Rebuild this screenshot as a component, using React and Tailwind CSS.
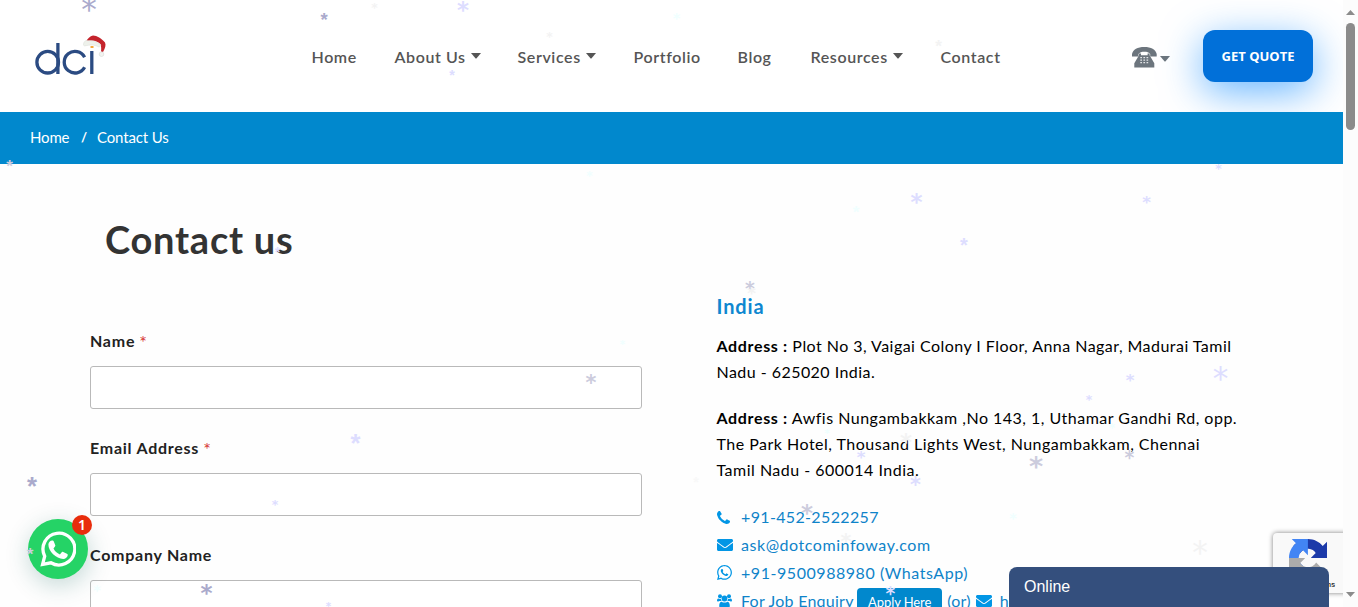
import React from "react";
import { FaEnvelope, FaWhatsapp } from "react-icons/fa";

const SIX = { family: '"DejaVu Sans", sans-serif', w: 0.45, cx: 0.25, cy: 0.335, weight: 400 };
const BOLD = { family: '"DejaVu Sans", sans-serif', w: 0.48, cx: 0.262, cy: 0.335, weight: 700 };
const FIVE = { family: '"Liberation Sans", sans-serif', w: 0.35, cx: 0.195, cy: 0.3, weight: 700 };

// [centre x, centre y, width, colour, glyph style]
const flakes = [
  [89, 4.5, 14, "#aaaacc", SIX], [324, 17, 6.5, "#aaaacc", FIVE], [374.5, 6.5, 6, "#f3f3f3", BOLD],
  [463, 6.5, 11, "#ddddff", BOLD], [549.5, 35.5, 6, "#f3f3f3", BOLD], [676.5, 15.5, 7, "#f0ffff", BOLD],
  [452, 72, 5, "#ddddff", FIVE], [938.5, 43.5, 6, "#f3f3f3", FIVE], [9.5, 163.5, 6, "#ccccdd", FIVE],
  [589.5, 174, 6, "#f0ffff", BOLD], [1218.5, 167.5, 6, "#ddddff", BOLD], [916.5, 198.5, 11, "#ddddff", BOLD],
  [1146.500, 200.5, 8, "#ddddff", BOLD], [856, 209, 6, "#f0ffff", FIVE], [964, 241, 7, "#ddddff", FIVE],
  [277.5, 249, 5, "#ddddff", FIVE], [750, 286.5, 9, "#ccccdd", BOLD], [751.5, 292, 8, "#f3f3f3", BOLD],
  [622.5, 342.5, 5, "#f0ffff", BOLD], [591, 379.5, 10, "#ccccdd", BOLD], [355.5, 439, 9, "#ddddff", FIVE],
  [1130, 378.5, 8, "#ddddff", BOLD], [1220.5, 373.5, 14, "#ddddff", SIX], [1089, 398.5, 6, "#ddddff", BOLD],
  [827, 431, 5, "#f0ffff", BOLD], [906, 438.5, 11, "#f3f3f3", BOLD], [861, 455.5, 8, "#ddddff", BOLD],
  [1129.5, 455.5, 9, "#ccccdd", BOLD], [1036, 462, 13, "#ccccdd", BOLD], [915.5, 481.5, 10, "#ddddff", BOLD],
  [32, 482, 9, "#aaaacc", FIVE], [275, 503.5, 6, "#ddddff", BOLD], [807, 509.5, 11, "#ccccdd", BOLD],
  [846, 539, 10, "#f3f3f3", BOLD], [1013, 516, 7, "#f0ffff", BOLD], [1200, 547.5, 14, "#f3f3f3", SIX],
  [97, 588, 7, "#f0ffff", BOLD], [206.5, 589.5, 11, "#aaaacc", BOLD], [328.5, 604.5, 5, "#ddddff", BOLD],
  [30, 551, 6, "#ccccdd", FIVE], [890.5, 591, 9, "#ddddff", BOLD], [696, 479, 5, "#f8f8f8", FIVE],
  [1112, 426, 6, "#f0ffff", BOLD],
];

function Flake({ data: [x, y, width, color, glyph] }) {
  const size = width / glyph.w;
  return (
    <span
      className="absolute leading-none select-none"
      style={{
        left: x - glyph.cx * size,
        top: y - glyph.cy * size,
        fontSize: size,
        color,
        fontFamily: glyph.family,
        fontWeight: glyph.weight,
      }}
    >
      *
    </span>
  );
}

function Logo() {
  return (
    <svg width="76" height="44" viewBox="32 32 76 44" fill="none">
      <g stroke="#2b4b82" strokeWidth="3.3">
        <circle cx="47.7" cy="61.2" r="10.8" />
        <path d="M57.9 42v31" />
        <path d="M84.6 56.2A10.8 10.8 0 1 0 84.6 66.2" />
        <path d="M91.8 50v23" />
      </g>
      <path d="M90.5 45h3v2h-3z" fill="#f5a93c" />
      <path d="M86 41c1.500-3.500 4-6 7-6.500 4 0 8.500 3 12 7 1.200 2.500.200 5.500-2 9.500l-2-.5c.4-2.500.3-5-.6-7.500-4-3.600-9-4.500-14.400-2z" fill="#c4242c" />
      <path d="M83.500 43c.4-2 1.500-3.500 3.500-3.500 5 0 9.500 1 13.500 4 .6 1.200-.4 2.600-1.800 2.400-4.500-2.400-9-2.200-13.700-1-1.200.2-1.700-.8-1.500-1.900z" fill="#eef1eb" stroke="#d9ddd6" strokeWidth=".5" />
      <circle cx="101.500" cy="53.200" r="2.300" fill="#f1f3f0" stroke="#d5d8d3" strokeWidth=".6" />
    </svg>
  );
}

function Caret() {
  return (
    <svg width="10" height="6" viewBox="0 0 10 6" className="mb-0.5 shrink-0">
      <path d="M0 0h10L5.600 5.200q-.6.600-1.200 0z" fill="currentColor" />
    </svg>
  );
}

function Telephone() {
  return (
    <svg width="25" height="21" viewBox="0 0 25 21" fill="#6c757d">
      <path d="M0 9.500V7C1 2.500 5.500 0 12.300 0S23.700 2.500 24.700 7v2.500h-6.500V7C17 5.300 15 4.800 12.300 4.800S7.700 5.300 6.500 7v2.500z" />
      <path d="M7 6.500h2v1.800h6.600V6.500h2v1.700l4.700 8V20.500H2.300v-4.300l4.700-8z" />
      <g fill="#fff">
        <path d="M8.300 10h1.700v1.200H8.300zM11.400 10h1.700v1.200h-1.700zM14.500 10h1.700v1.200h-1.700zM8.300 12.500h1.700v1.200H8.300zM11.400 12.500h1.700v1.200h-1.700zM14.500 12.500h1.700v1.200h-1.700zM8.300 15h1.700v1.200H8.300zM11.400 15h1.700v1.200h-1.700zM14.500 15h1.700v1.200h-1.700z" opacity=".8" />
      </g>
    </svg>
  );
}

function Phone() {
  return (
    <svg width="13" height="13" viewBox="0 128 1408 1408" fill="currentColor">
      <path d="M1408 1240q0 27-10 70.500t-21 68.500q-21 50-122 106-94 51-186 51-27 0-53-3.500t-57.500-12.500-47-14.500-55.500-20.500-49-18q-98-35-175-83-127-79-264-216t-216-264q-48-77-83-175-3-9-18-49t-20.500-55.500-14.500-47-12.500-57.500-3.500-53q0-92 51-186 56-101 106-122 25-11 68.500-21t70.500-10q14 0 21 3 18 6 53 76 11 19 30 54t35 63.500 31 53.500q3 4 17.500 25t21.500 35.500 7 28.500q0 20-28.500 50t-62 55-62 53-28.500 46q0 9 5 22.500t8.500 20.500 14 24 11.500 19q76 137 174 235t235 174q2 1 19 11.500t24 14 20.500 8.500 22.500 5q18 0 46-28.500t53-62 55-62 50-28.500q14 0 28.500 7t35.500 21.500 25 17.500q25 15 53.500 31t63.500 35 54 30q70 35 76 53 3 7 3 21z" />
    </svg>
  );
}

function People() {
  return (
    <svg width="15" height="14" viewBox="0 0 15 14" fill="currentColor">
      <circle cx="3" cy="2.200" r="2" />
      <circle cx="12" cy="2.200" r="2" />
      <circle cx="7.500" cy="4.500" r="2.900" />
      <path d="M0 7.300C0 5.500.4 4.500 1.300 4.500c.6.300 1.700.6 2.600.2.100 1 .3 1.600.8 2.300H2.500L1.300 7.600zM15 7.300c0-1.800-.4-2.800-1.300-2.800-.6.300-1.700.6-2.600.2-.1 1-.3 1.600-.8 2.300h2.200l1.200.6z" />
      <path d="M2.200 12c0-2.700.8-4.300 2.500-4.300.8.500 1.600.9 2.800.9s2-.4 2.800-.9c1.700 0 2.500 1.600 2.500 4.300 0 1.200-.8 2-1.900 2H4.100c-1.100 0-1.900-.8-1.900-2z" />
    </svg>
  );
}

function Recaptcha() {
  return (
    <svg width="38" height="38" viewBox="0 0 64 64">
      <path fill="#1c3aa9" d="M64 31.955l-.033-1.370V4.687l-7.160 7.160C50.948 4.674 42.033.093 32.050.093c-10.400 0-19.622 4.960-25.458 12.640l11.736 11.860a15.550 15.550 0 0 1 4.754-5.334c2.050-1.600 4.952-2.906 8.968-2.906.485 0 .860.057 1.135.163 4.976.393 9.288 3.140 11.828 7.124l-8.307 8.307L64 31.953" />
      <path fill="#4285f4" d="M31.862.094l-1.370.033H4.594l7.160 7.160C4.580 13.147 0 22.060 0 32.046c0 10.400 4.960 19.622 12.640 25.458L24.500 45.768a15.550 15.550 0 0 1-5.334-4.754c-1.600-2.050-2.906-4.952-2.906-8.968 0-.485.057-.860.163-1.135.393-4.976 3.140-9.288 7.124-11.828l8.307 8.307L31.860.095" />
      <path fill="#ababab" d="M.001 32.045l.033 1.370v25.898l7.160-7.160c5.860 7.173 14.774 11.754 24.760 11.754 10.400 0 19.622-4.960 25.458-12.640l-11.736-11.860a15.550 15.550 0 0 1-4.754 5.334c-2.050 1.600-4.952 2.906-8.968 2.906-.485 0-.860-.057-1.135-.163-4.976-.393-9.288-3.140-11.828-7.124l8.307-8.307c-10.522.040-22.400.066-27.295-.005" />
    </svg>
  );
}

const navItems = [
  { label: "Home", box: "w-[83px]" },
  { label: "About Us", box: "w-[123px]", menu: true },
  { label: "Services", box: "w-[116px]", menu: true },
  { label: "Portfolio", box: "w-[104px]" },
  { label: "Blog", box: "w-[73px]" },
  { label: "Resources", box: "w-[130px]", menu: true },
  { label: "Contact", box: "w-[60px]" },
];

function Header() {
  return (
    <header className="flex h-28 shrink-0 items-center overflow-hidden bg-white pl-8">
      <div className="w-[279.500px] shrink-0 pb-0.5"><Logo /></div>
      <nav className="flex shrink-0 pt-0.5 text-base font-semibold tracking-[0.6px] text-[#555]">
        {navItems.map((n) => (
          <a key={n.label} className={"flex items-center gap-[5px] whitespace-nowrap " + n.box}>
            {n.label}
            {n.menu && <Caret />}
          </a>
        ))}
      </nav>
      <div className="ml-[131.500px] flex w-[71px] shrink-0 items-center gap-[3px] pt-0.5 text-[#6c757d]">
        <Telephone />
        <span className="pt-1.5"><Caret /></span>
      </div>
      <button className="flex h-[52px] w-[110px] shrink-0 items-center justify-center rounded-xl bg-[#0170d9] pt-px font-['Open_Sans',sans-serif] text-[13px] font-bold tracking-[0px] text-white shadow-[0_10px_40px_rgba(0,132,255,0.6)]">
        GET QUOTE
      </button>
    </header>
  );
}

function Field({ label, required }) {
  return (
    <div className="h-[107px] shrink-0">
      <label className="flex h-[38px] gap-1 text-base leading-[26px] font-bold tracking-[0.75px] text-[#222]">
        {label}
        {required && <span className="text-lg font-normal leading-[28px] text-[#d63637]">*</span>}
      </label>
      <input className="block h-[43px] w-[552px] rounded-[3px] border border-[#b9b9b9] bg-white" />
    </div>
  );
}

function ContactRow({ icon, tracking, children }) {
  return (
    <div className={"flex h-7 items-center text-base whitespace-nowrap text-[#0e83c9] " + tracking}>
      <span className="flex w-[24.500px] shrink-0 items-center text-[#0296e5]">{icon}</span>
      {children}
    </div>
  );
}

function Details() {
  return (
    <section className="w-[560px] shrink-0 pt-[10px] text-base leading-[26px] whitespace-nowrap text-black">
      <h2 className="text-xl leading-7 font-bold tracking-[0.900px] text-[#0e87d0]">India</h2>
      <p className="mt-[13px] tracking-[0.460px]">
        <strong className="tracking-[0.650px]">Address :</strong> Plot No 3, Vaigai Colony I Floor, Anna Nagar, Madurai Tamil<br />
        Nadu - 625020 India.
      </p>
      <p className="mt-5 tracking-[0.490px]">
        <strong className="tracking-[0.650px]">Address :</strong> Awfis Nungambakkam ,No 143, 1, Uthamar Gandhi Rd, opp.<br />
        The Park Hotel, Thousand Lights West, Nungambakkam, Chennai<br />
        Tamil Nadu - 600014 India.
      </p>
      <div className="mt-5">
        <ContactRow tracking="tracking-[0.350px]" icon={<Phone />}>+91-452-2522257</ContactRow>
        <ContactRow tracking="tracking-[0.550px]" icon={<FaEnvelope size={16} />}>ask@dotcominfoway.com</ContactRow>
        <ContactRow tracking="tracking-[0.550px]" icon={<FaWhatsapp size={17} className="-ml-px mb-0.5" />}>+91-9500988980 (WhatsApp)</ContactRow>
        <ContactRow tracking="tracking-[0.250px]" icon={<People />}>
          For Job Enquiry
          <a className="mt-0.5 mr-[5px] ml-[3.500px] flex h-7 w-[85px] items-center justify-center rounded bg-[#0188cd] pt-0.5 text-[13px] tracking-[-0.100px] text-white">Apply Here</a>
          (or)
          <FaEnvelope size={16} className="mr-2 ml-[5px] text-[#0296e5]" />
          hr@dotcominfoway.com
        </ContactRow>
      </div>
    </section>
  );
}

function WhatsAppButton() {
  return (
    <div className="absolute top-[519px] left-7 flex h-[60px] w-[60px] items-center justify-center rounded-full bg-[#25d366] text-white shadow-[1px_6px_24px_rgba(7,94,84,0.24)]">
      <svg width="36" height="36" viewBox="0 0 36 36" fill="none">
        <path d="M2.600 33.400l2.100-8.200A15.900 15.900 0 1 1 10.900 31.800z" stroke="#fff" strokeWidth="3.300" />
        <path d="M12.300 9.500c.8 0 1.100.2 1.500 1.100l1.400 3.400c.3.700.1 1.200-.4 1.800l-1.300 1.600c1.400 2.700 3.400 4.600 6.400 6l1.600-2c.5-.7 1-.8 1.700-.5l3.700 1.800c.6.300.9.600.9 1.200-.2 2.300-2.300 4-4.600 4-7 0-15-7.600-14.800-14.300.1-2.200 1.700-4.100 3.900-4.100z" fill="#fff" />
      </svg>
      <span className="absolute -top-1 left-11 flex h-5 w-5 items-center justify-center rounded-full bg-[#e82c0c] font-['Noto_Sans',sans-serif] text-sm font-semibold">1</span>
    </div>
  );
}

function Scrollbar() {
  return (
    <aside className="flex h-full w-[15px] shrink-0 flex-col items-center justify-between bg-[#fcfcfc] pt-[10px] pb-[10px] text-[#8b8b8b]">
      <div className="flex flex-col items-center gap-2">
        <svg width="9" height="5" viewBox="0 0 9 5" fill="currentColor"><path d="M4.500 0L9 5H0z" /></svg>
        <div className="h-[107px] w-[9px] rounded-full bg-[#8b8b8b]" />
      </div>
      <svg width="9" height="5" viewBox="0 0 9 5" fill="currentColor"><path d="M0 0h9L4.500 5z" /></svg>
    </aside>
  );
}

export default function App() {
  return (
    <div className="flex h-[607px] w-[1358px] overflow-hidden bg-white font-['Lato',sans-serif]">
      <div className="relative flex h-full w-[1343px] shrink-0 flex-col overflow-hidden bg-[#fefefe]">
        <Header />
        <div className="flex h-[52px] shrink-0 items-center bg-[#0188cd] px-[30px] pb-px text-[15px] tracking-[-0.150px] text-white">
          <a className="w-[51px]">Home</a>
          <span className="w-4 text-[13px] font-bold">/</span>
          <span>Contact Us</span>
        </div>
        <h1 className="mt-12 ml-[105px] h-14 shrink-0 text-[38px] leading-[54px] font-bold tracking-[0.750px] text-[#333]">Contact us</h1>
        <main className="mt-[14px] flex shrink-0 pl-[90px]">
          <section className="w-[626.500px] shrink-0 pt-[46px]">
            <Field label="Name" required />
            <Field label="Email Address" required />
            <Field label="Company Name" />
          </section>
          <Details />
        </main>

        <WhatsAppButton />
        <div className="absolute top-[533px] left-[1273px] h-[60px] w-64 rounded-sm bg-[#f9f9f9] shadow-[0_0_5px_gray]">
          <div className="flex w-[70px] flex-col items-center pt-1.5">
            <Recaptcha />
            <span className="mt-[3px] font-['Roboto',sans-serif] text-[8px] leading-[10px] whitespace-nowrap text-black">Privacy - Terms</span>
          </div>
        </div>
        <div className="absolute top-[567px] left-[1009px] flex h-12 w-80 items-center rounded-t-lg bg-[#344f7d] px-[15px] pb-2 font-['Liberation_Sans',sans-serif] text-base text-white">
          Online
        </div>
        {flakes.map((f, i) => <Flake key={i} data={f} />)}
      </div>
      <Scrollbar />
    </div>
  );
}
